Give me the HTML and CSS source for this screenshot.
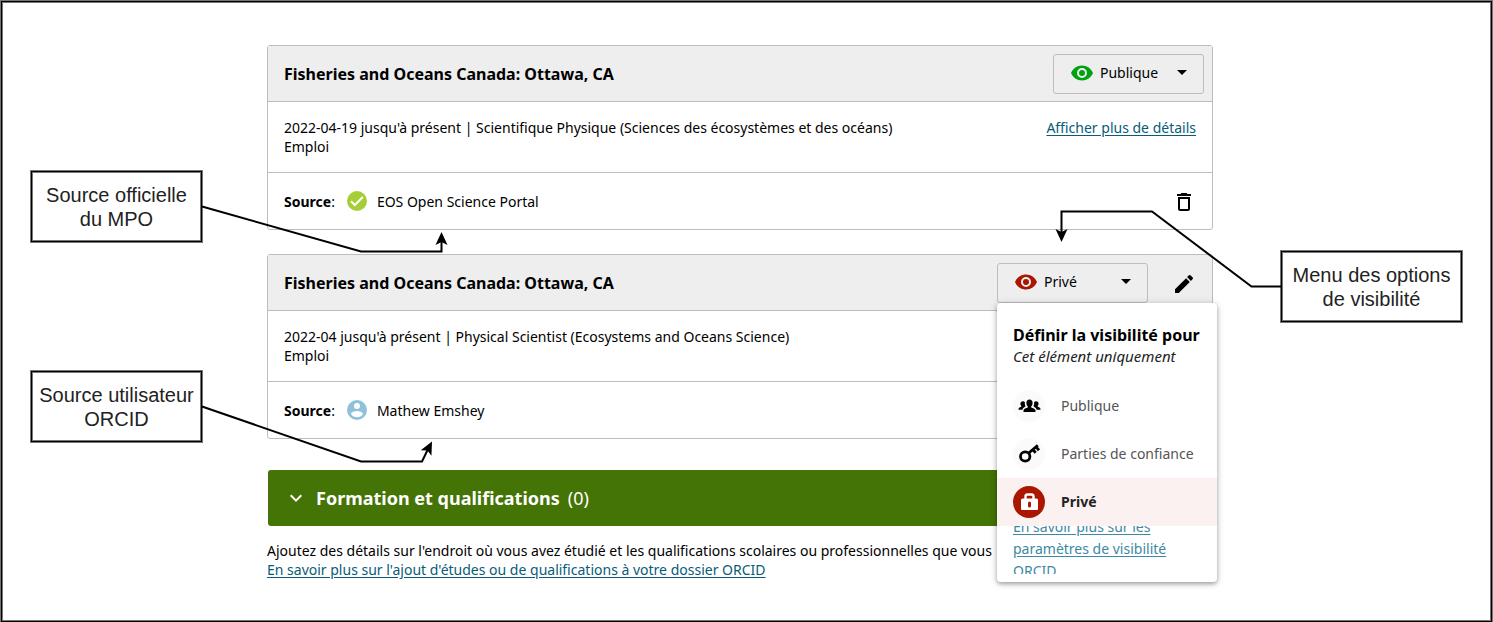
FILE: index.html
```html
<!DOCTYPE html>
<html lang="fr">
<head>
<meta charset="utf-8">
<title>Dossier ORCID</title>
<link rel="stylesheet" href="styles.css">
</head>
<body>
<svg class="sprite" aria-hidden="true">
  <symbol id="eye" viewBox="0 0 24 24"><path d="M12 4.500C7 4.500 2.700 7.600 1 12c1.700 4.400 6 7.500 11 7.500s9.300-3.100 11-7.500c-1.700-4.400-6-7.500-11-7.500zM12 17a5 5 0 1 1 0-10 5 5 0 0 1 0 10zm0-8a3 3 0 1 0 0 6 3 3 0 0 0 0-6z"/></symbol>
</svg>
<div class="canvas">
  <aside class="notes">
    <p class="note">Source officielle<br>du MPO</p>
    <p class="note">Source utilisateur<br>ORCID</p>
  </aside>

  <main class="record">
    <section class="card">
      <header class="card-head">
        <h2>Fisheries and Oceans Canada: Ottawa, CA</h2>
        <button class="visibility" type="button">
          <svg class="icon public" aria-hidden="true"><use href="#eye"/></svg>
          <span>Publique</span><i class="caret"></i>
        </button>
      </header>
      <div class="card-body">
        <p>2022-04-19 jusqu'à présent | Scientifique Physique (Sciences des écosystèmes et des océans)<br>Emploi</p>
        <a href="#details">Afficher plus de détails</a>
      </div>
      <footer class="card-foot">
        <p class="label"><b>Source</b>:</p>
        <svg class="badge" viewBox="0 0 20 20" aria-hidden="true"><circle cx="10" cy="10" r="10" fill="#a6ce39"/><path d="M4 10.300l3.800 3.700 8-8" fill="none" stroke="#fff" stroke-width="2"/></svg>
        <p>EOS Open Science Portal</p>
        <button class="icon-button" type="button" aria-label="Supprimer">
          <svg class="icon" viewBox="0 0 24 24" aria-hidden="true"><path d="M6 19c0 1.100.9 2 2 2h8c1.100 0 2-.9 2-2V7H6v12zM8 9h8v10H8V9zm7.500-5l-1-1h-5l-1 1H5v2h14V4z"/></svg>
        </button>
      </footer>
    </section>

    <section class="card">
      <header class="card-head">
        <h2>Fisheries and Oceans Canada: Ottawa, CA</h2>
        <div class="picker">
          <button class="visibility" type="button" aria-expanded="true">
            <svg class="icon private" aria-hidden="true"><use href="#eye"/></svg>
            <span>Privé</span><i class="caret"></i>
          </button>
          <div class="menu">
            <h3>Définir la visibilité pour</h3>
            <p class="scope">Cet élément uniquement</p>
            <button class="option" type="button">
              <svg class="disc" viewBox="0 0 32 32" aria-hidden="true"><circle cx="16" cy="16" r="16" fill="#fafafa"/><path d="M16.500 9.500c2 0 3.100 1.500 3.100 3.500 0 1.500-.6 2.700-1.400 3.400v1c1.500.7 4.300 1.200 4.300 3.300v1.300h-12v-1.300c0-2.100 2.800-2.600 4.300-3.300v-1c-.8-.7-1.400-1.900-1.400-3.400 0-2 1.100-3.500 3.100-3.500z"/><path id="side" d="M10 11.300c.9 0 1.500.3 1.900.9-.2 1.500 0 2.800.7 4-.7.800-2.600 1-3.200 3.600H5.500v-.9c0-1.300 1.700-1.700 2.800-2.200v-.8c-.6-.5-.9-1.300-.9-2.200 0-1.400.9-2.400 2.600-2.400z"/><use href="#side" transform="matrix(-1 0 0 1 33 0)"/></svg>
              <span>Publique</span>
            </button>
            <button class="option" type="button">
              <svg class="disc" viewBox="0 0 32 32" aria-hidden="true"><circle cx="16" cy="16" r="16" fill="#fafafa"/><g fill="none" stroke="#000" stroke-width="2.800"><circle cx="12.200" cy="18.500" r="4.700"/><path d="M15.500 15.300l9.300-8M19.700 11.500l3 3.300M22.800 8.800l3.200 3.400"/></g></svg>
              <span>Parties de confiance</span>
            </button>
            <button class="option selected" type="button">
              <svg class="disc" viewBox="0 0 32 32" aria-hidden="true"><circle cx="16" cy="16" r="16" fill="#aa1600"/><path d="M12.500 13v-2.500a2 2 0 0 1 2-2h4a2 2 0 0 1 2 2V13" fill="none" stroke="#fff" stroke-width="2.400"/><path d="M9.500 12.500h14a1.500 1.500 0 0 1 1.500 1.500v9a1 1 0 0 1-1 1H9a1 1 0 0 1-1-1v-9a1.500 1.500 0 0 1 1.500-1.500z" fill="#fff"/><path d="M15 17a1.500 1.500 0 0 1 3 0v3a1.500 1.500 0 0 1-3 0z" fill="#aa1600"/></svg>
              <span>Privé</span>
            </button>
            <div class="more"><a href="#visibilite">En savoir plus sur les paramètres de visibilité ORCID</a></div>
          </div>
        </div>
        <button class="icon-button" type="button" aria-label="Modifier">
          <svg class="icon" viewBox="0 0 24 24" aria-hidden="true"><path d="M3 17.250V21h3.750L17.800 9.900 14.100 6.200 3 17.250zM20.700 7a1 1 0 0 0 0-1.400l-2.300-2.300a1 1 0 0 0-1.400 0l-1.900 1.800 3.800 3.800L20.700 7z"/></svg>
        </button>
      </header>
      <div class="card-body">
        <p>2022-04 jusqu'à présent | Physical Scientist (Ecosystems and Oceans Science)<br>Emploi</p>
      </div>
      <footer class="card-foot">
        <p class="label"><b>Source</b>:</p>
        <svg class="badge" viewBox="2 2 20 20" aria-hidden="true"><path fill="#8fc1dd" d="M12 2a10 10 0 1 0 0 20 10 10 0 0 0 0-20zm0 3a3 3 0 1 1 0 6 3 3 0 0 1 0-6zm0 14.200a7.200 7.200 0 0 1-6-3.220c.03-1.990 4-3.080 6-3.080s5.970 1.090 6 3.080a7.200 7.200 0 0 1-6 3.220z"/></svg>
        <p>Mathew Emshey</p>
      </footer>
    </section>

    <section class="education">
      <h2 class="bar">
        <svg class="icon" viewBox="0 0 24 24" aria-hidden="true"><path fill="none" stroke="#fff" stroke-width="2" d="M6.700 9.300L12 14.600l5.300-5.300"/></svg>
        <span>Formation et qualifications</span> <span class="count">(0)</span>
      </h2>
      <p class="hint">Ajoutez des détails sur l'endroit où vous avez étudié et les qualifications scolaires ou professionnelles que vous</p>
      <p><a href="#aide">En savoir plus sur l'ajout d'études ou de qualifications à votre dossier ORCID</a></p>
    </section>
  </main>

  <aside class="notes notes-right">
    <p class="note">Menu des options<br>de visibilité</p>
  </aside>

  <svg class="links links-left" viewBox="0 0 460 480" aria-hidden="true">
    <defs><path id="head" d="M0 0L6 13L0 10L-6 13Z"/></defs>
    <path class="wire" d="M202 206.500L361 251.500H441.500V238"/>
    <use href="#head" x="441.500" y="232"/>
    <path class="wire" d="M202 406.500L361 461.500H422L429 447"/>
    <use href="#head" transform="translate(432 441.500) rotate(27)"/>
  </svg>
  <svg class="links links-right" viewBox="1050 0 240 480" aria-hidden="true">
    <path class="wire" d="M1282 286.500H1251.500L1152 211.500H1061.500V236"/>
    <use href="#head" transform="translate(1061.500 242) rotate(180)"/>
  </svg>
</div>
</body>
</html>
```
FILE: styles.css
```css
* { box-sizing: border-box; }
body { margin: 0; background: #fff; color: #000; font: 14px/19px "Noto Sans", sans-serif; }
h2, h3, p { margin: 0; }
a { color: #085c77; text-decoration: underline; text-underline-offset: 2px; }
button { font: inherit; color: inherit; margin: 0; cursor: pointer; }
.sprite { position: absolute; width: 0; height: 0; }
.icon { width: 24px; height: 24px; flex: none; }
.public { fill: #00a30f; }
.private { fill: #aa1600; }

.canvas {
  position: relative;
  display: grid;
  grid-template-columns: 266px minmax(0, 1fr) 279px;
  min-height: 100vh;
  padding-bottom: 32px;
  border: 1px solid #777;
  border-bottom: 0;
  box-shadow: inset 0 0 0 1px #000, inset 0 0 0 2px #777;
}
.notes { display: flex; flex-direction: column; gap: 127px; padding: 169px 64px 0 29px; }
.notes-right { padding: 249px 29px 0 67px; }
.note {
  border: 1px solid #777;
  box-shadow: inset 0 0 0 1px #000, inset 0 0 0 2px #777;
  padding: 12px 0 11px;
  text-align: center;
  white-space: nowrap;
  font: 20px/24px "Liberation Sans", Arial, sans-serif;
  color: #222;
}
.links { position: absolute; top: -1px; height: 480px; pointer-events: none; }
.links-left { left: -1px; width: 460px; }
.links-right { right: 202px; width: 240px; }
.wire { fill: none; stroke: #000; stroke-width: 2; }

.record { padding-top: 44px; }
.card { border: 1px solid #bdbdbd; border-radius: 3px; margin-bottom: 24px; }
.card-head {
  display: flex;
  align-items: center;
  height: 56px;
  padding: 0 8px 0 16px;
  background: #eee;
  border-bottom: 1px solid #bdbdbd;
}
.card-head h2 { flex: 1; font-size: 16px; line-height: 24px; }
.visibility {
  display: flex;
  align-items: center;
  gap: 6px;
  width: 151px;
  height: 40px;
  padding: 0 16px 2px;
  background: transparent;
  border: 1px solid #bdbdbd;
  border-radius: 3px;
}
.caret { margin-left: auto; border: 5px solid transparent; border-top-color: #000; border-bottom: 0; }
.icon-button { display: flex; padding: 9px 8px 7px; border: 0; background: none; margin-left: 16px; }
.card-body { display: flex; justify-content: space-between; padding: 16px; border-bottom: 1px solid #bdbdbd; }
.card-foot { display: flex; align-items: center; height: 56px; padding: 0 8px 0 16px; }
.label { margin-right: 12px; }
.badge { width: 20px; height: 20px; margin-right: 10px; }
.card-foot .icon-button { margin-left: auto; }

.picker { position: relative; }
.menu {
  position: absolute;
  z-index: 1;
  top: 100%;
  left: 0;
  width: 220px;
  padding: 20px 0 8px;
  background: #fff;
  border-radius: 4px;
  box-shadow: 0 2px 4px rgba(0, 0, 0, .3), 0 1px 8px rgba(0, 0, 0, .15);
}
.menu h3 { padding: 0 16px; font-size: 16px; line-height: 24px; white-space: nowrap; }
.scope { padding: 0 16px; margin-bottom: 16px; font-size: 15px; font-style: italic; color: #222; }
.option {
  display: flex;
  align-items: center;
  gap: 16px;
  width: 100%;
  height: 48px;
  padding: 0 16px;
  border: 0;
  background: none;
  color: #555;
}
.disc { width: 32px; height: 32px; }
.selected { background: #fbf1f0; color: #222; font-weight: 700; }
.more { display: flex; align-items: center; height: 48px; padding: 0 16px 2px; overflow: hidden; line-height: 22px; }
.more a { color: #3d88a5; }

.education { padding-top: 7px; }
.bar {
  display: flex;
  align-items: center;
  gap: 8px;
  height: 56px;
  padding: 0 16px;
  margin: 0 0 15px 1px;
  border-radius: 3px;
  background: #447405;
  color: #fff;
  font-size: 18px;
  line-height: 24px;
}
.count { font-weight: 400; }
.hint { overflow: hidden; white-space: nowrap; }
```
